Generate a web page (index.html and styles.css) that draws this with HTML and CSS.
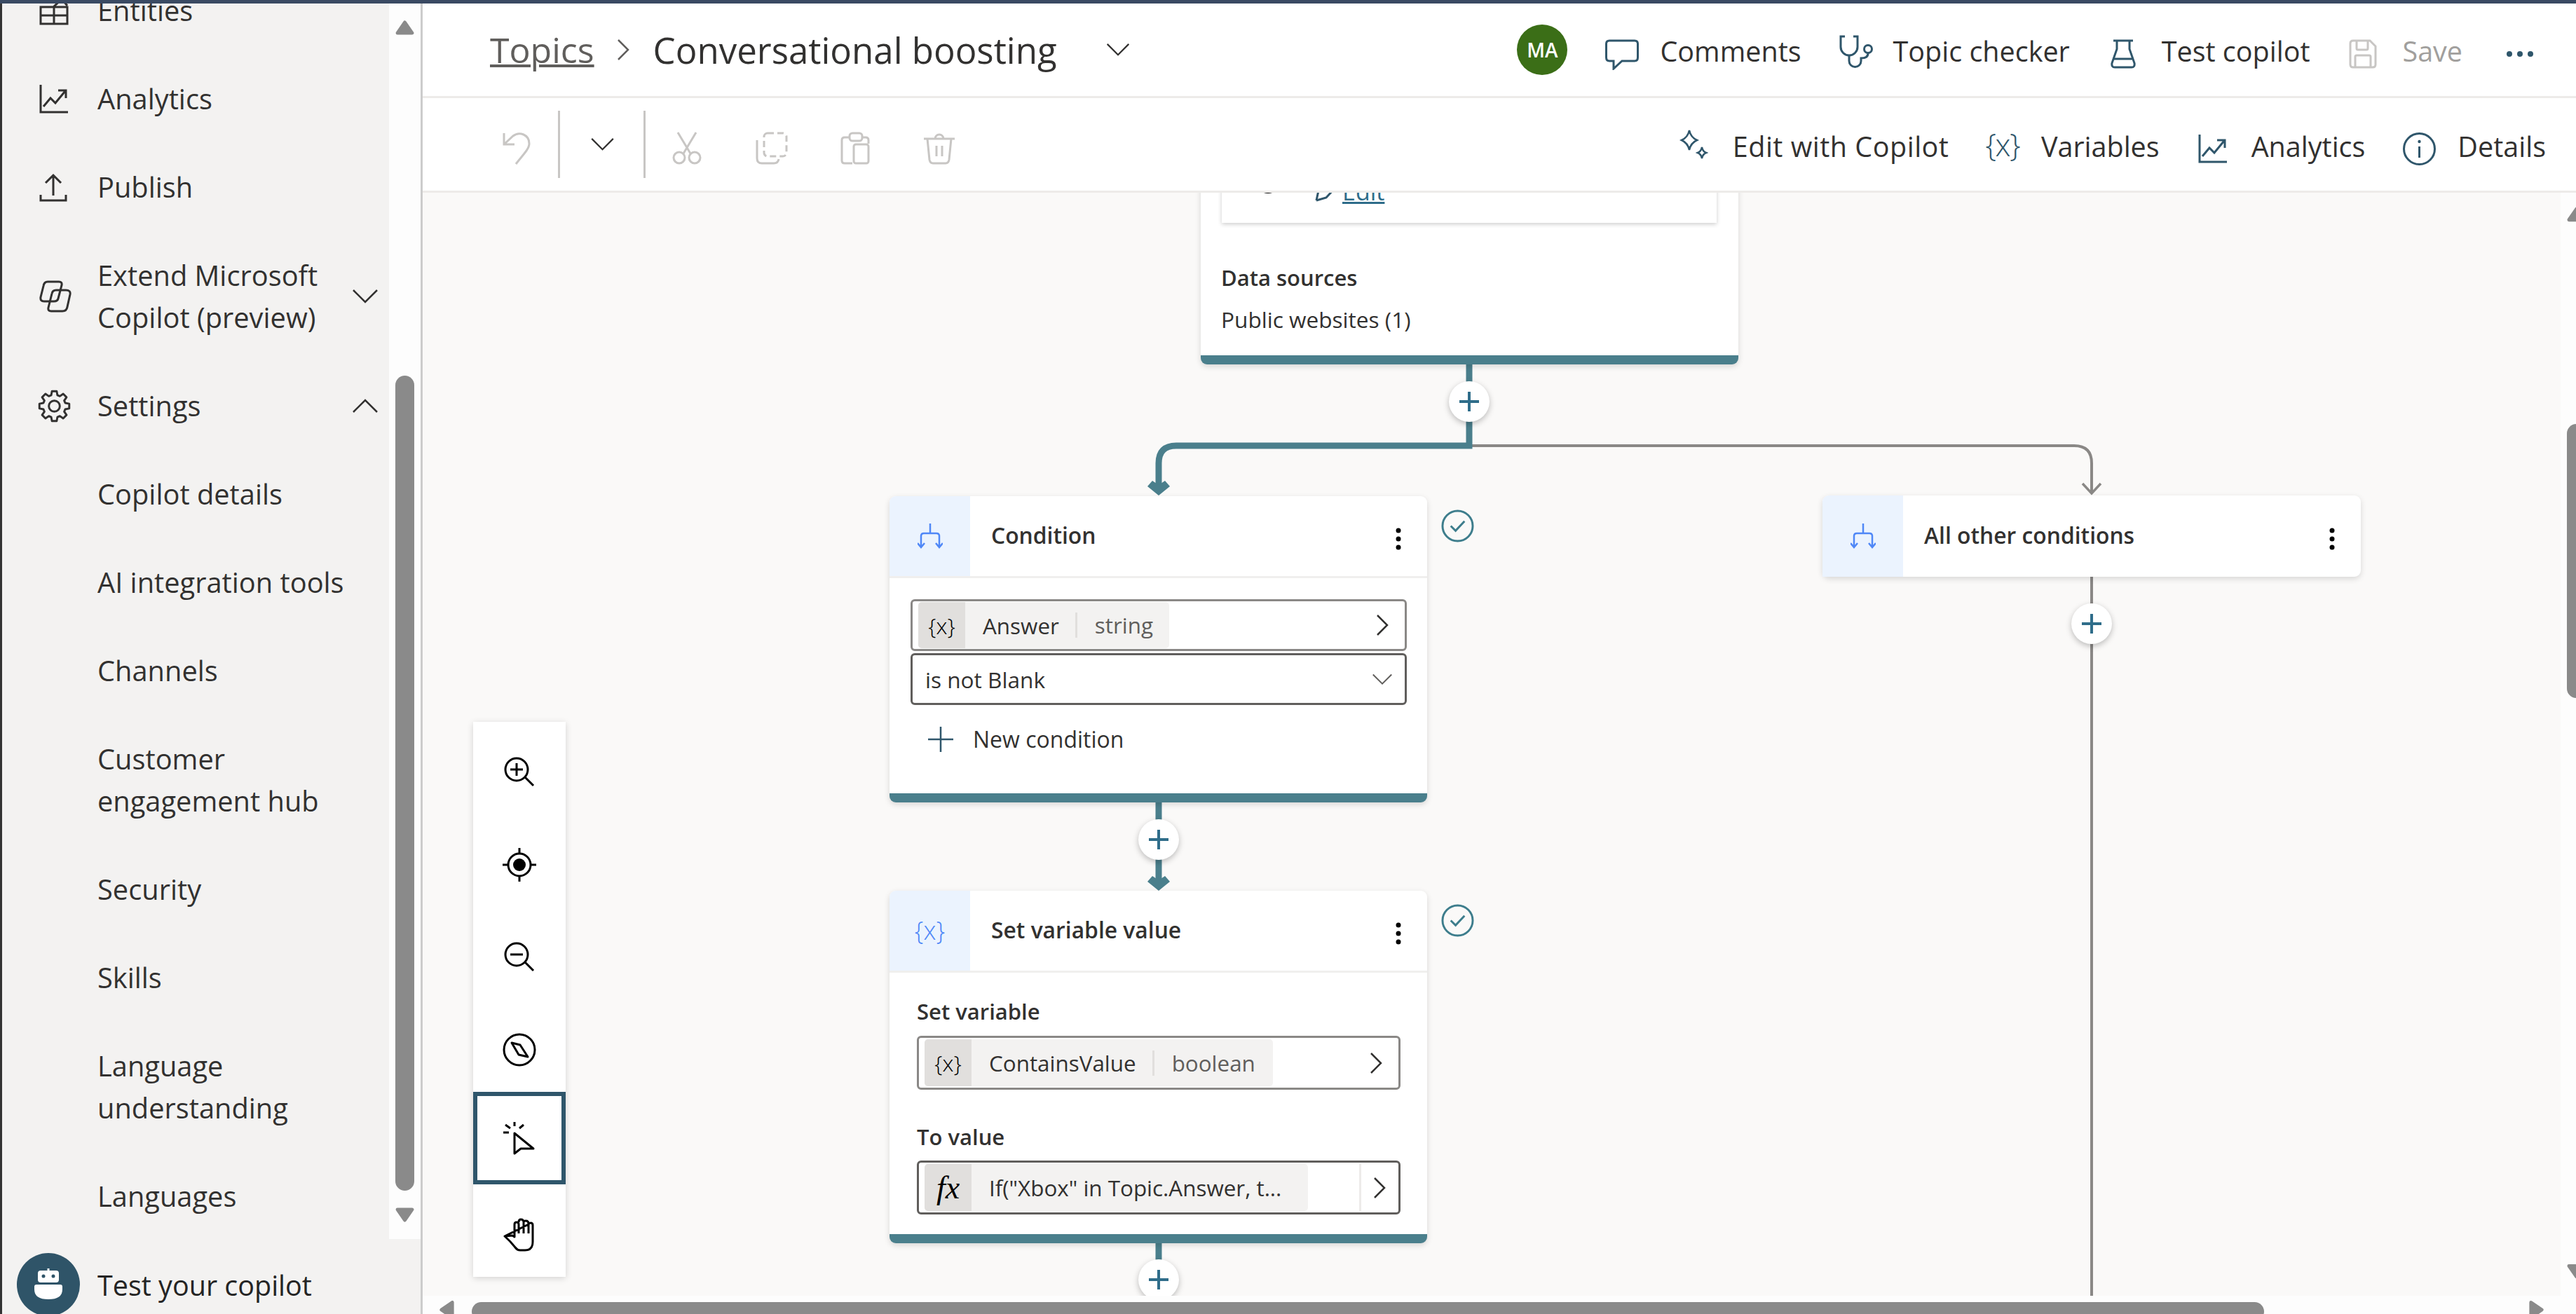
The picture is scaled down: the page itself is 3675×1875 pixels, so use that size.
FILE: index.html
```html
<!DOCTYPE html>
<html lang="en">
<head>
    <meta charset="UTF-8">
    <meta name="viewport" content="width=device-width, initial-scale=1.0">
    <title>Conversational boosting</title>
    <link rel="stylesheet" href="styles.css">
</head>
<body>

<svg class="defs" width="0" height="0">
    <symbol id="i-analytics" viewBox="0 0 42 42"><path d="M2 1V40H41M6 32L16 20L23 27L37 10M27 9H38V20" fill="none" stroke="currentColor" stroke-width="3"/></symbol>
    <symbol id="i-condition" viewBox="0 0 36 36"><path d="M18 0V14M5 34V18Q5 14 9 14H27Q31 14 31 18V34M0 28L5 34L10 28M26 28L31 34L36 28" fill="none" stroke="currentColor" stroke-width="2.5"/></symbol>
    <symbol id="i-dots" viewBox="0 0 10 32"><circle cx="5" cy="4" r="3.5" fill="currentColor"/><circle cx="5" cy="16" r="3.5" fill="currentColor"/><circle cx="5" cy="28" r="3.5" fill="currentColor"/></symbol>
    <symbol id="i-check" viewBox="0 0 48 48"><circle cx="24" cy="24" r="22" fill="none" stroke="currentColor" stroke-width="3"/><path d="M14 24L21 31L34 17" fill="none" stroke="currentColor" stroke-width="3"/></symbol>
    <symbol id="i-right" viewBox="0 0 18 30"><path d="M2 1L16 15L2 29" fill="none" stroke="currentColor" stroke-width="2.5"/></symbol>
    <symbol id="i-down" viewBox="0 0 36 20"><path d="M1 1L18 18L35 1" fill="none" stroke="currentColor" stroke-width="2.5"/></symbol>
    <symbol id="i-arrow" viewBox="0 0 32 21"><path d="M0 8L7 0L16 6L25 0L32 8L16 21Z" fill="currentColor"/></symbol>
    <symbol id="i-tri" viewBox="0 0 28 22"><path d="M14 3L25 19H3Z" fill="currentColor" stroke="currentColor" stroke-width="5" stroke-linejoin="round"/></symbol>
</svg>

<div class="top-strip"></div>

<div class="app">
    <aside class="sidebar">
        <div class="nav-area">
            <ul class="nav-list">
                <li class="nav-item">
                    <svg class="nav-icon" viewBox="0 0 42 42"><path d="M2 16H40V40H2ZM21 16V40M2 28H40M20 16L32 5L40 14" fill="none" stroke="currentColor" stroke-width="3"/></svg>
                    <span>Entities</span>
                </li>
                <li class="nav-item">
                    <svg class="nav-icon"><use href="#i-analytics"/></svg>
                    <span>Analytics</span>
                </li>
                <li class="nav-item">
                    <svg class="nav-icon" viewBox="0 0 42 42"><path d="M20 33V5M9 15L20 4L31 15M2 32V40H38V32" fill="none" stroke="currentColor" stroke-width="3"/></svg>
                    <span>Publish</span>
                </li>
                <li class="nav-item">
                    <svg class="nav-icon nav-copilot" viewBox="0 0 46 46"><g fill="none" stroke="currentColor" stroke-width="3"><path d="M12 2H28Q33 2 32 7L27 26Q26 30 21 30H7Q1 30 2 24L6 8Q7 2 12 2Z"/><path d="M24 14H38Q45 14 44 20L40 38Q39 44 33 44H17Q12 44 13 39L18 19Q19 14 24 14Z"/></g></svg>
                    <span>Extend Microsoft<br>Copilot (preview)</span>
                    <svg class="nav-caret"><use href="#i-down"/></svg>
                </li>
                <li class="nav-item">
                    <svg class="nav-icon nav-gear" viewBox="0 0 48 48"><path d="M39.86 19.45L45.73 20.56V27.44L39.86 28.55L38.43 32L41.8 36.93L36.93 41.8L32 38.43L28.55 39.86L27.44 45.73H20.56L19.45 39.86L16 38.43L11.07 41.8L6.2 36.93L9.57 32L8.14 28.55L2.27 27.44V20.56L8.14 19.45L9.57 16L6.2 11.07L11.07 6.2L16 9.57L19.45 8.14L20.56 2.27H27.44L28.55 8.14L32 9.57L36.93 6.2L41.8 11.07L38.43 16Z" fill="none" stroke="currentColor" stroke-width="3" stroke-linejoin="round"/><circle cx="24" cy="24" r="8" fill="none" stroke="currentColor" stroke-width="3"/></svg>
                    <span>Settings</span>
                    <svg class="nav-caret flip"><use href="#i-down"/></svg>
                </li>
                <li class="nav-item"><span class="nav-sub">Copilot details</span></li>
                <li class="nav-item"><span class="nav-sub">AI integration tools</span></li>
                <li class="nav-item"><span class="nav-sub">Channels</span></li>
                <li class="nav-item"><span class="nav-sub">Customer<br>engagement hub</span></li>
                <li class="nav-item"><span class="nav-sub">Security</span></li>
                <li class="nav-item"><span class="nav-sub">Skills</span></li>
                <li class="nav-item"><span class="nav-sub">Language<br>understanding</span></li>
                <li class="nav-item"><span class="nav-sub">Languages</span></li>
            </ul>
            <div class="nav-scroll">
                <svg class="tri tri-up"><use href="#i-tri"/></svg>
                <div class="nav-thumb"></div>
                <svg class="tri tri-down"><use href="#i-tri"/></svg>
            </div>
        </div>
        <div class="test-row">
            <span class="bot">
                <svg width="42" height="46" viewBox="0 0 42 46"><path d="M21 0V4" stroke="#fff" stroke-width="3"/><rect x="6" y="3" width="30" height="17" rx="4" fill="#fff"/><circle cx="14" cy="11" r="2.5" fill="#2f5468"/><circle cx="28" cy="11" r="2.5" fill="#2f5468"/><path d="M1 26Q1 23 4 23H38Q41 23 41 26V30Q41 44 21 44Q1 44 1 30Z" fill="#fff"/></svg>
            </span>
            <span class="test-label">Test your copilot</span>
        </div>
    </aside>

    <main class="main">
        <header class="titlebar">
            <a class="crumb-link">Topics</a>
            <svg class="crumb-sep"><use href="#i-right"/></svg>
            <h1 class="crumb-title">Conversational boosting</h1>
            <svg class="title-caret"><use href="#i-down"/></svg>
            <div class="actions">
                <span class="avatar">MA</span>
                <span class="action act-comments">
                    <svg width="48" height="44" viewBox="0 0 48 44"><path d="M6 2H42Q46.5 2 46.5 6.5V26Q46.5 31 42 31H24L12 42V31H6Q1.5 31 1.5 26V6.5Q1.5 2 6 2Z" fill="none" stroke="currentColor" stroke-width="3"/></svg>
                    <span class="action-label">Comments</span>
                </span>
                <span class="action act-checker">
                    <svg width="50" height="48" viewBox="0 0 50 48"><g fill="none" stroke="currentColor" stroke-width="3"><path d="M9 2H3V17A12 12 0 0 0 27 17V2H21"/><path d="M15 29V37A8.5 8.5 0 0 0 32 37V33Q42 33 42 26"/><circle cx="42" cy="20" r="5.5"/></g></svg>
                    <span class="action-label">Topic checker</span>
                </span>
                <span class="action act-test">
                    <svg width="36" height="42" viewBox="0 0 36 42"><path d="M4 2H32M9 2V14L2 34Q1 40 6 40H30Q35 40 34 34L27 14V2M5 28H31" fill="none" stroke="currentColor" stroke-width="3"/></svg>
                    <span class="action-label">Test copilot</span>
                </span>
                <span class="action act-save disabled">
                    <svg width="40" height="42" viewBox="0 0 40 42"><g fill="none" stroke="currentColor" stroke-width="3"><path d="M6 2H30L38 10V36Q38 40 34 40H6Q2 40 2 36V6Q2 2 6 2Z"/><path d="M11 2V13Q11 15 13 15H25Q27 15 27 13V2M9 40V25Q9 23 11 23H29Q31 23 31 25V40"/></g></svg>
                    <span class="action-label">Save</span>
                </span>
                <svg class="more" width="40" height="10" viewBox="0 0 40 10"><circle cx="5" cy="5" r="4" fill="currentColor"/><circle cx="20" cy="5" r="4" fill="currentColor"/><circle cx="35" cy="5" r="4" fill="currentColor"/></svg>
            </div>
        </header>

        <div class="toolbar">
            <svg class="tool-icon undo" width="42" height="47" viewBox="0 0 42 47"><path d="M4 2V18H19M4 18L17 6C26 -1 40 4 40 17C40 25 30 34 21 46" fill="none" stroke="currentColor" stroke-width="3"/></svg>
            <span class="tool-sep first"></span>
            <svg class="tool-caret"><use href="#i-down"/></svg>
            <span class="tool-sep"></span>
            <svg class="tool-icon cut" width="42" height="47" viewBox="0 0 42 47"><g fill="none" stroke="currentColor" stroke-width="3"><path d="M8 1L26 31M34 1L16 31"/><circle cx="10" cy="37" r="8"/><circle cx="32" cy="37" r="8"/></g></svg>
            <svg class="tool-icon copy" width="48" height="47" viewBox="0 0 48 47"><g fill="none" stroke="currentColor" stroke-width="3"><rect x="14" y="2" width="32" height="33" rx="5" stroke-dasharray="9 5"/><path d="M4 12V38Q4 45 11 45H28Q34 45 35 39"/></g></svg>
            <svg class="tool-icon paste" width="42" height="47" viewBox="0 0 42 47"><g fill="none" stroke="currentColor" stroke-width="3"><path d="M14 8H6Q2 8 2 12V41Q2 45 6 45H17M30 8H36Q40 8 40 12V17"/><rect x="13" y="2" width="18" height="11" rx="4"/><rect x="19" y="18" width="21" height="27" rx="3"/></g></svg>
            <svg class="tool-icon trash" width="48" height="47" viewBox="0 0 48 47"><g fill="none" stroke="currentColor" stroke-width="3"><path d="M2 10H46M18 10A6 6 0 0 1 30 10M7 10L10 40Q11 45 15 45H33Q37 45 38 40L41 10M20 20V35M28 20V35"/></g></svg>
            <div class="actions">
                <span class="action act-edit">
                    <svg width="41" height="42" viewBox="0 0 41 42"><path d="M14 1Q16 11 25 15Q16 19 14 29Q12 19 3 15Q12 11 14 1ZM32 25Q33 31 38 33Q33 35 32 41Q31 35 26 33Q31 31 32 25Z" fill="none" stroke="currentColor" stroke-width="2.5"/></svg>
                    <span class="action-label">Edit with Copilot</span>
                </span>
                <span class="action act-vars">
                    <span class="var-glyph">{x}</span>
                    <span class="action-label">Variables</span>
                </span>
                <span class="action act-ana">
                    <svg width="42" height="42"><use href="#i-analytics"/></svg>
                    <span class="action-label">Analytics</span>
                </span>
                <span class="action act-details">
                    <svg width="47" height="47" viewBox="0 0 47 47"><circle cx="23.5" cy="23.5" r="22" fill="none" stroke="currentColor" stroke-width="3"/><circle cx="23.5" cy="13" r="2.2" fill="currentColor"/><path d="M23.5 20V36" stroke="currentColor" stroke-width="3"/></svg>
                    <span class="action-label">Details</span>
                </span>
            </div>
        </div>

        <div class="canvas-row">
            <div class="canvas">
                <svg class="wires" width="3050" height="1574">
                    <g fill="none" stroke="#8a8886">
                        <path d="M1493 361H2356Q2381 361 2381 386V428" stroke-width="4"/>
                        <path d="M2368 415L2381 429L2394 415" stroke-width="3.5"/>
                        <path d="M2381 548V1574" stroke-width="4"/>
                    </g>
                    <g fill="none" stroke="#4a7f8c" stroke-width="9">
                        <path d="M1493 232V361H1075Q1050 361 1050 386V420"/>
                        <path d="M1050 870V985"/>
                        <path d="M1050 1499V1560"/>
                    </g>
                    <use href="#i-arrow" x="1034" y="411" width="32" height="21" color="#4a7f8c"/>
                    <use href="#i-arrow" x="1034" y="975" width="32" height="21" color="#4a7f8c"/>
                </svg>

                <section class="node node-source">
                    <div class="inner-card">
                        <span class="inner-dot"></span>
                        <svg class="inner-pen" width="30" height="30" viewBox="0 0 30 30"><path d="M2 28L5 14L17 2M2 28L16 24L27 12" fill="none" stroke="currentColor" stroke-width="3"/></svg>
                        <a class="inner-link">Edit</a>
                    </div>
                    <p class="source-title">Data sources</p>
                    <p class="source-text">Public websites (1)</p>
                </section>

                <section class="node node-condition">
                    <div class="node-head">
                        <span class="node-badge"><svg width="36" height="36"><use href="#i-condition"/></svg></span>
                        <span class="node-title">Condition</span>
                        <svg class="node-dots"><use href="#i-dots"/></svg>
                    </div>
                    <div class="cond-body">
                        <div class="field">
                            <span class="chip"><span class="chip-icon">{x}</span><span class="chip-name">Answer</span><span class="chip-type">string</span></span>
                            <svg class="field-go"><use href="#i-right"/></svg>
                        </div>
                        <div class="field field-select">
                            <span class="select-text">is not Blank</span>
                            <svg class="select-caret"><use href="#i-down"/></svg>
                        </div>
                        <div class="new-cond">
                            <svg width="36" height="36" viewBox="0 0 36 36"><path d="M18 0V36M0 18H36" stroke="currentColor" stroke-width="2.5"/></svg>
                            <span>New condition</span>
                        </div>
                    </div>
                </section>
                <svg class="node-ok ok-condition"><use href="#i-check"/></svg>

                <section class="node node-set">
                    <div class="node-head">
                        <span class="node-badge"><span class="var-glyph blue">{x}</span></span>
                        <span class="node-title">Set variable value</span>
                        <svg class="node-dots"><use href="#i-dots"/></svg>
                    </div>
                    <div class="set-body">
                        <label class="set-label">Set variable</label>
                        <div class="field field-tall">
                            <span class="chip"><span class="chip-icon">{x}</span><span class="chip-name">ContainsValue</span><span class="chip-type">boolean</span></span>
                            <svg class="field-go"><use href="#i-right"/></svg>
                        </div>
                        <label class="set-label second">To value</label>
                        <div class="field field-tall field-dark">
                            <span class="chip chip-formula"><span class="chip-icon fx">fx</span><span class="chip-name">If("Xbox" in Topic.Answer, t...</span></span>
                            <span class="field-rule"></span>
                            <svg class="field-go"><use href="#i-right"/></svg>
                        </div>
                    </div>
                </section>
                <svg class="node-ok ok-set"><use href="#i-check"/></svg>

                <section class="node node-other">
                    <div class="node-head bare">
                        <span class="node-badge"><svg width="36" height="36"><use href="#i-condition"/></svg></span>
                        <span class="node-title">All other conditions</span>
                        <svg class="node-dots"><use href="#i-dots"/></svg>
                    </div>
                </section>

                <button class="add-btn add-a"></button>
                <button class="add-btn add-b"></button>
                <button class="add-btn add-c"></button>
                <button class="add-btn add-d"></button>

                <div class="zoom-bar">
                    <div class="zoom-btn">
                        <svg width="48" height="48" viewBox="0 0 48 48"><g fill="none" stroke="#000" stroke-width="3"><circle cx="20" cy="20" r="16"/><path d="M32 31L44 43M20 11V29M11 20H29"/></g></svg>
                    </div>
                    <div class="zoom-btn">
                        <svg width="48" height="48" viewBox="0 0 48 48"><g fill="none" stroke="#000" stroke-width="3"><circle cx="24" cy="24" r="16"/><path d="M24 0V8M24 40V48M0 24H8M40 24H48"/></g><circle cx="24" cy="24" r="9" fill="#000"/></svg>
                    </div>
                    <div class="zoom-btn">
                        <svg width="48" height="48" viewBox="0 0 48 48"><g fill="none" stroke="#000" stroke-width="3"><circle cx="20" cy="20" r="16"/><path d="M32 31L44 43M11 20H29"/></g></svg>
                    </div>
                    <div class="zoom-btn">
                        <svg width="48" height="48" viewBox="0 0 48 48"><g fill="none" stroke="#000" stroke-width="3" stroke-linejoin="round"><circle cx="24" cy="24" r="22"/><path d="M13 14L25 17L36 34L23 31Z"/></g></svg>
                    </div>
                    <div class="zoom-btn selected">
                        <svg width="48" height="48" viewBox="0 0 48 48"><g fill="none" stroke="#000" stroke-width="3" stroke-linejoin="round"><path d="M17 17V46L26 39H44Z"/><path d="M17 1V7M4 5L11 10M1 16H9M30 5L24 10"/></g></svg>
                    </div>
                    <div class="zoom-btn">
                        <svg width="48" height="48" viewBox="0 0 48 48"><path d="M3 26L14 25L17 27V9Q17 6 20 6Q23 6 23 9V22M23 6Q23 2 26 2Q30 2 30 6V22M30 6Q30 4 33 4Q37 4 37 8V22M37 9Q38 7 40 7Q43 7 43 10V34Q43 46 32 46H25Q21 46 18 42Q12 34 3 26Z" fill="none" stroke="#000" stroke-width="3" stroke-linejoin="round"/></svg>
                    </div>
                </div>
            </div>
            <div class="v-scroll">
                <svg class="v-arrow up"><use href="#i-tri"/></svg>
                <div class="v-thumb"></div>
                <svg class="v-arrow down"><use href="#i-tri"/></svg>
            </div>
        </div>

        <div class="h-scroll">
            <svg class="h-arrow left"><use href="#i-tri"/></svg>
            <div class="h-thumb"></div>
            <svg class="h-arrow right"><use href="#i-tri"/></svg>
        </div>
    </main>
</div>

</body>
</html>
```

FILE: styles.css
```css
* {
    box-sizing: border-box;
}
html, body {
    margin: 0;
    height: 100%;
    overflow: hidden;
}
body {
    font-family: "Open Sans", "Noto Sans", sans-serif;
    color: #323130;
    background: #fff;
    display: flex;
    flex-direction: column;
}
.defs {
    position: absolute;
}
.top-strip {
    height: 5px;
    flex: none;
    background: #3a4a63;
}
.app {
    flex: 1;
    display: flex;
    min-height: 0;
}

/* sidebar */
.sidebar {
    width: 603px;
    flex: none;
    display: flex;
    flex-direction: column;
    background: #f3f2f1;
    border-left: 3px solid #333;
    border-right: 3px solid #ccc;
}
.nav-area {
    height: 1763px;
    flex: none;
    display: flex;
    overflow: hidden;
}
.nav-list {
    list-style: none;
    width: 552px;
    margin: -53px 0 0;
    padding: 0;
    flex: none;
}
.nav-item {
    display: flex;
    align-items: center;
    padding: 33px 20px 33px 53px;
    font-size: 39.8px;
    line-height: 60px;
}
.nav-icon {
    width: 42px;
    height: 42px;
    flex: none;
    margin-right: 41px;
    color: #323130;
}
.nav-copilot {
    width: 46px;
    height: 46px;
    margin-right: 37px;
}
.nav-gear {
    width: 47px;
    height: 47px;
    margin-left: -2px;
    margin-right: 38px;
}
.nav-sub {
    margin-left: 83px;
}
.nav-caret {
    width: 36px;
    height: 20px;
    margin-left: auto;
    margin-right: -4px;
    color: #323130;
}
.nav-caret.flip {
    transform: scaleY(-1);
}
.nav-scroll {
    width: 45px;
    flex: none;
    background: #fdfdfd;
    padding: 0 9px;
    display: flex;
    flex-direction: column;
}
.tri {
    width: 27px;
    height: 21px;
    flex: none;
    color: #8a8a8a;
}
.tri-up {
    margin-top: 24px;
}
.tri-down {
    margin-top: 24px;
    transform: scaleY(-1);
}
.nav-thumb {
    height: 1163px;
    flex: none;
    margin-top: 486px;
    border-radius: 14px;
    background: #8a8a8a;
}
.test-row {
    flex: 1;
    display: flex;
    align-items: center;
    padding: 20px 0 0 21px;
    color: #242424;
    font-size: 39.5px;
}
.bot {
    width: 90px;
    height: 90px;
    flex: none;
    margin-right: 25px;
    border-radius: 50%;
    background: #2f5468;
    display: flex;
    align-items: center;
    justify-content: center;
}
.test-label {
    margin-top: 2px;
}

/* header rows */
.main {
    flex: 1;
    min-width: 0;
    display: flex;
    flex-direction: column;
}
.titlebar, .toolbar {
    height: 135px;
    flex: none;
    display: flex;
    align-items: center;
    border-bottom: 3px solid #edebe9;
}
.titlebar {
    padding: 0 60px 0 96px;
}
.crumb-link {
    font-size: 50px;
    color: #605e5c;
    text-decoration: underline;
    text-decoration-thickness: 4px;
}
.crumb-sep {
    width: 18px;
    height: 30px;
    margin-left: 32px;
    margin-right: 34px;
    color: #605e5c;
}
.crumb-title {
    margin: 0;
    font-size: 51px;
    font-weight: 400;
}
.title-caret {
    width: 34px;
    height: 18px;
    margin-left: 70px;
    color: #323130;
}
.actions {
    margin-left: auto;
    display: flex;
    align-items: center;
    color: #2f566b;
}
.avatar {
    width: 72px;
    height: 72px;
    margin-right: 54px;
    border-radius: 50%;
    background: #3b6e17;
    color: #fff;
    font-size: 28px;
    font-weight: 600;
    display: flex;
    align-items: center;
    justify-content: center;
}
.action {
    display: flex;
    align-items: center;
    gap: 30px;
    margin-right: 53px;
}
.action-label {
    font-size: 39.5px;
    color: #323130;
}
.titlebar .action-label {
    margin-top: 4px;
}
.act-comments svg {
    margin-top: 14px;
}
.act-checker {
    gap: 28px;
    margin-right: 58px;
}
.act-checker svg {
    margin-top: 5px;
}
.act-test {
    gap: 37px;
    margin-right: 56px;
}
.act-test svg, .act-save svg {
    margin-top: 12px;
}
.act-save {
    gap: 36px;
    margin-right: 62px;
}
.disabled {
    color: #c8c6c4;
}
.disabled .action-label {
    color: #a19f9d;
}
.more {
    color: #2f566b;
    margin-top: 12px;
}
.var-glyph {
    font-size: 44px;
    font-weight: 300;
    line-height: 46px;
    letter-spacing: -1.5px;
}
.var-glyph.blue {
    color: #4f87f7;
    font-size: 36px;
    letter-spacing: 0;
}
.toolbar {
    padding: 6px 43px 0 112px;
    color: #c8c6c4;
}
.tool-icon {
    flex: none;
    margin-top: 5px;
}
.tool-sep {
    width: 3px;
    height: 96px;
    flex: none;
    margin-left: 39px;
    margin-top: -6px;
    background: #c8c6c4;
}
.tool-sep.first {
    margin-right: 43px;
}
.tool-caret {
    width: 35px;
    height: 18px;
    flex: none;
    margin-top: -6px;
    color: #323130;
}
.tool-sep:not(.first) {
    margin-left: 41px;
}
.cut {
    margin-left: 38px;
}
.copy, .paste, .trash {
    margin-left: 75px;
}
.act-edit {
    gap: 35px;
    margin-right: 52px;
}
.act-edit svg, .act-vars .var-glyph {
    margin-top: -6px;
}
.act-edit .action-label {
    letter-spacing: 0.5px;
}
.act-vars {
    gap: 31px;
    margin-right: 55px;
}
.act-ana {
    gap: 34px;
    margin-right: 54px;
}
.act-ana svg {
    margin-top: 5px;
}
.act-details {
    gap: 31px;
    margin-right: 0;
}
.act-details svg {
    margin-top: 6px;
}

/* canvas */
.canvas-row {
    flex: 1;
    min-height: 0;
    display: flex;
}
.canvas {
    flex: 1;
    position: relative;
    overflow: hidden;
    background: #faf9f8;
}
.wires {
    position: absolute;
    left: 0;
    top: 0;
}
.node {
    position: absolute;
    background: #fff;
    border-radius: 9px;
    box-shadow: 0 3px 9px rgba(0, 0, 0, 0.14);
}
.node-source {
    left: 1110px;
    top: -60px;
    width: 767px;
    height: 305px;
    padding-left: 30px;
    border-bottom: 13px solid #4a7f8c;
}
.inner-card {
    width: 706px;
    height: 103px;
    display: flex;
    align-items: flex-end;
    background: #fff;
    box-shadow: 0 2px 6px rgba(0, 0, 0, 0.2);
    padding: 0 0 30px 48px;
}
.inner-dot {
    width: 36px;
    height: 36px;
    border-radius: 50%;
    border: 3px solid #000;
    margin-bottom: 12px;
}
.inner-pen {
    margin-left: 49px;
    color: #2f566b;
    margin-bottom: 0;
}
.inner-link {
    margin-left: 9px;
    font-size: 34px;
    line-height: 44px;
    margin-bottom: -7px;
    color: #2f6d8a;
    text-decoration: underline;
}
.source-title, .source-text {
    margin: 0 0 0 -1px;
    font-size: 31.6px;
    line-height: 60px;
}
.source-title {
    margin-top: 48px;
    font-size: 31px;
    font-weight: 600;
}
.node-condition {
    left: 666px;
    top: 433px;
    width: 767px;
    height: 437px;
    border-bottom: 13px solid #4a7f8c;
}
.node-set {
    left: 666px;
    top: 996px;
    width: 767px;
    height: 503px;
    border-bottom: 13px solid #4a7f8c;
}
.node-other {
    left: 1997px;
    top: 432px;
    width: 768px;
    height: 116px;
}
.node-head {
    height: 117px;
    display: flex;
    align-items: center;
    border-bottom: 3px solid #f0efee;
}
.node-head.bare {
    height: 116px;
    border-bottom: 0;
}
.node-badge {
    width: 115px;
    height: 100%;
    flex: none;
    display: flex;
    align-items: center;
    justify-content: center;
    background: #ebf3fe;
    color: #4f87f7;
    border-radius: 9px 0 0 0;
}
.node-title {
    margin: 0 0 3px 30px;
    font-size: 31.8px;
    font-weight: 600;
}
.node-dots {
    width: 10px;
    height: 32px;
    margin-left: auto;
    margin-right: 36px;
    margin-top: 8px;
    color: #000;
}
.node-ok {
    position: absolute;
    width: 47px;
    height: 47px;
    left: 1453px;
    color: #3d7d8c;
}
.ok-condition {
    top: 452px;
}
.ok-set {
    top: 1015px;
}
.cond-body {
    padding: 30px 29px 0 30px;
}
.field {
    height: 74px;
    display: flex;
    align-items: center;
    padding: 0 8px;
    border: 3px solid #8a8886;
    border-radius: 6px;
}
.field-select {
    margin-top: 3px;
    padding: 0 18px;
    border-color: #605e5c;
}
.field-dark {
    border-color: #605e5c;
}
.chip {
    width: 358px;
    height: 66px;
    display: flex;
    align-items: center;
    flex: none;
    border-radius: 5px;
    background: #f3f2f1;
    overflow: hidden;
    font-size: 31.4px;
}
.chip-icon {
    width: 67px;
    height: 100%;
    flex: none;
    display: flex;
    align-items: center;
    justify-content: center;
    background: #e1dfdd;
    font-size: 32px;
    font-weight: 300;
    color: #000;
}
.chip-icon.fx {
    font-family: "Liberation Serif", serif;
    font-style: italic;
    font-size: 46px;
}
.chip-name {
    margin-left: 25px;
    padding-right: 23px;
    white-space: nowrap;
}
.chip-type {
    padding-left: 25px;
    border-left: 3px solid #e1dfdd;
    color: #605e5c;
    line-height: 36px;
}
.field-go {
    width: 18px;
    height: 30px;
    margin-left: auto;
    margin-right: 15px;
    color: #323130;
}
.select-text {
    font-size: 31.6px;
}
.select-caret {
    width: 28px;
    height: 17px;
    margin-left: auto;
    color: #605e5c;
}
.new-cond {
    display: flex;
    align-items: center;
    margin: 27px 0 0 25px;
    gap: 28px;
    font-size: 32px;
    color: #323130;
}
.new-cond svg {
    color: #2f566b;
}
.set-body {
    padding: 31px 38px 0 39px;
}
.set-label {
    display: block;
    height: 48px;
    margin-bottom: 11px;
    font-size: 31px;
    line-height: 48px;
    font-weight: 600;
}
.set-label.second {
    margin-top: 43px;
    margin-bottom: 10px;
}
.field-tall {
    height: 77px;
}
.node-set .chip {
    width: 497px;
    height: 67px;
}
.node-set .chip-formula {
    width: 547px;
}
.field-rule {
    width: 3px;
    height: 67px;
    margin-left: 73px;
    background: #edebe9;
}
.node-set .field-rule + .field-go {
    margin-right: 10px;
}
.add-btn {
    position: absolute;
    width: 58px;
    height: 58px;
    padding: 0;
    border: 0;
    border-radius: 50%;
    background: #fff;
    box-shadow: 0 3px 9px rgba(0, 0, 0, 0.25);
}
.add-btn::before, .add-btn::after {
    content: "";
    position: absolute;
    background: #2f6d8a;
}
.add-btn::before {
    left: 15px;
    right: 15px;
    top: 27px;
    height: 4px;
}
.add-btn::after {
    top: 15px;
    bottom: 15px;
    left: 27px;
    width: 4px;
}
.add-a {
    left: 1464px;
    top: 269px;
}
.add-b {
    left: 1021px;
    top: 894px;
}
.add-c {
    left: 1021px;
    top: 1522px;
}
.add-d {
    left: 2352px;
    top: 586px;
}
.zoom-bar {
    position: absolute;
    left: 72px;
    top: 755px;
    width: 132px;
    background: #fff;
    box-shadow: 0 2px 9px rgba(0, 0, 0, 0.16);
}
.zoom-btn {
    height: 132px;
    padding-top: 12px;
    display: flex;
    align-items: center;
    justify-content: center;
}
.zoom-btn.selected {
    padding-top: 0;
    border: 6px solid #2f566b;
}

/* scrollbars */
.v-scroll {
    width: 22px;
    flex: none;
    background: #fdfdfd;
    overflow: hidden;
    display: flex;
    flex-direction: column;
    padding-left: 9px;
}
.v-arrow {
    width: 27px;
    height: 22px;
    flex: none;
    color: #8a8a8a;
}
.v-arrow.up {
    margin-top: 20px;
}
.v-arrow.down {
    margin-top: auto;
    margin-bottom: 24px;
    transform: scaleY(-1);
}
.v-thumb {
    width: 27px;
    height: 391px;
    flex: none;
    margin-top: 288px;
    border-radius: 14px;
    background: #8a8a8a;
}
.h-scroll {
    height: 26px;
    flex: none;
    display: flex;
    align-items: flex-start;
    padding-top: 9px;
    overflow: hidden;
    background: #fdfdfd;
}
.h-arrow {
    width: 27px;
    height: 22px;
    flex: none;
    color: #8a8a8a;
}
.h-arrow.left {
    margin-left: 21px;
    transform: rotate(-90deg);
}
.h-arrow.right {
    margin-left: 375px;
    transform: rotate(90deg);
}
.h-thumb {
    width: 2557px;
    height: 27px;
    flex: none;
    margin-left: 22px;
    border-radius: 14px;
    background: #8a8a8a;
}
```
